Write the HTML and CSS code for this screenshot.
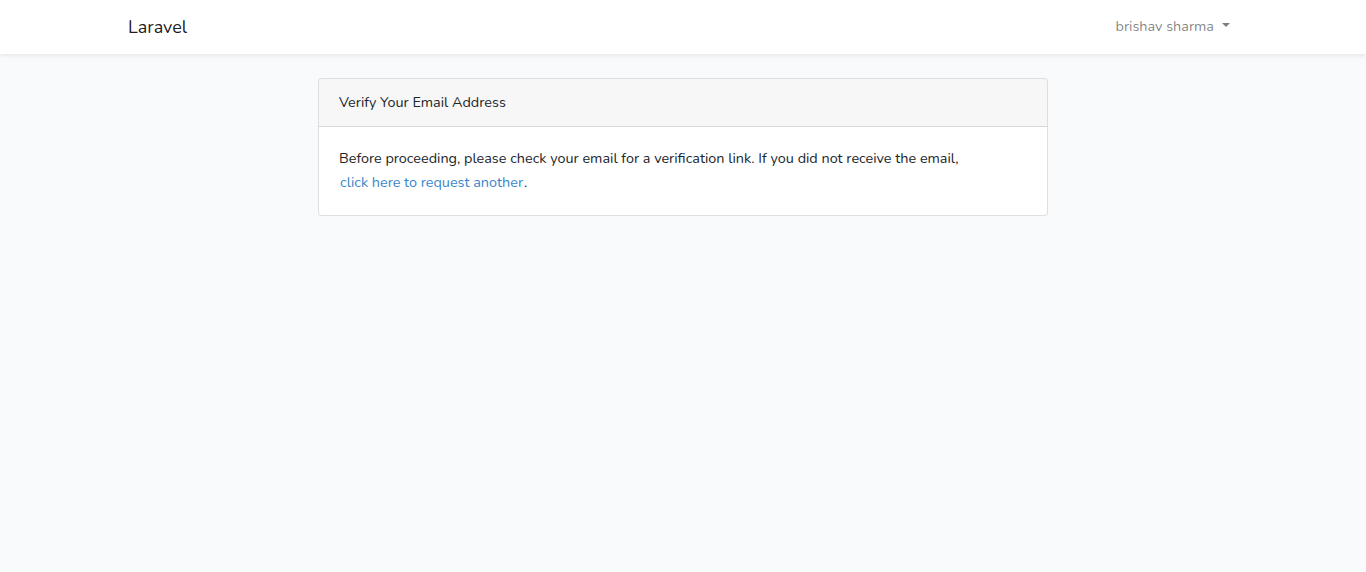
FILE: index.html
```html
<!DOCTYPE html>
<html lang="en">
<head>
<meta charset="utf-8">
<title>Laravel</title>
<link rel="stylesheet" href="styles.css">
</head>
<body>
<div class="app">
  <nav class="navbar">
    <div class="container nav-inner">
      <a class="brand" href="#">Laravel</a>
      <ul class="nav-right">
        <li><a class="nav-link dropdown-toggle" href="#">brishav sharma</a></li>
      </ul>
    </div>
  </nav>
  <main class="main">
    <div class="container row-center">
      <div class="col">
        <div class="card">
          <div class="card-header">Verify Your Email Address</div>
          <div class="card-body">
            Before proceeding, please check your email for a verification link. If you did not receive the email,
            <form class="inline-form"><button type="button" class="btn-link">click here to request another</button>.</form>
          </div>
        </div>
      </div>
    </div>
  </main>
</div>
</body>
</html>
```
FILE: styles.css
```css
* { box-sizing: border-box; }
html, body { margin: 0; padding: 0; }
body {
  font-family: "Nunito", "Lato", "Open Sans", sans-serif;
  font-size: 14.4px;
  line-height: 1.6;
  color: #212529;
  background: #f8fafc;
  height: 572px;
}
.container {
  width: 1140px;
  margin: 0 auto;
  padding: 0 15px;
}
.navbar {
  background: #fff;
  box-shadow: 0 2px 4px rgba(0,0,0,0.075);
  padding: 8px 0;
  height: 54px;
}
.nav-inner {
  display: flex;
  align-items: center;
  justify-content: space-between;
}
.brand {
  font-size: 18px;
  line-height: 28px;
  padding: 5px 0;
  color: rgba(0,0,0,0.9);
  text-decoration: none;
  margin-right: 16px;
}
.nav-right {
  list-style: none;
  margin: 0;
  padding: 0;
  display: flex;
}
.nav-link {
  display: block;
  padding: 7px 8px 8px;
  color: rgba(0,0,0,0.5);
  text-decoration: none;
}
.dropdown-toggle::after {
  content: "";
  display: inline-block;
  margin-left: 8px;
  vertical-align: 0.3em;
  border-top: 0.3em solid;
  border-right: 0.3em solid transparent;
  border-left: 0.3em solid transparent;
  border-bottom: 0;
}
.main { padding: 24px 0; }
.row-center { display: flex; justify-content: center; }
.col { width: 760px; padding: 0 15px; }
.card {
  background: #fff;
  border: 1px solid rgba(0,0,0,0.125);
  border-radius: 4px;
}
.card-header {
  padding: 12px 20px;
  background: rgba(0,0,0,0.03);
  border-bottom: 1px solid rgba(0,0,0,0.125);
  border-radius: 3px 3px 0 0;
}
.card-body { padding: 20px; }
.inline-form { display: inline; margin: 0; }
.btn-link {
  font: inherit;
  color: #3a86cc;
  background: transparent;
  border: 1px solid transparent;
  padding: 0;
  margin: 0;
  vertical-align: baseline;
  cursor: pointer;
}
```
